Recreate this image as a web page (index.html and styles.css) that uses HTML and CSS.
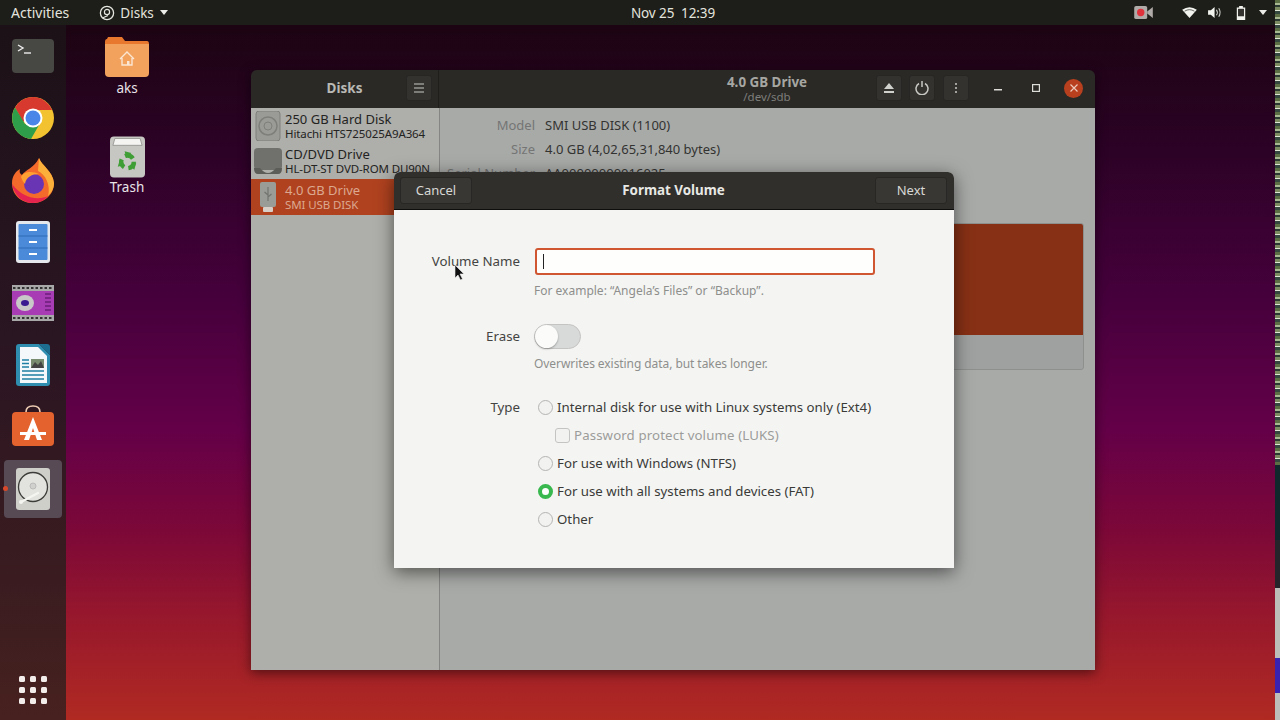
FILE: index.html
```html
<!DOCTYPE html>
<html lang="en">
<head>
    <meta charset="UTF-8">
    <title>Disks - Format Volume</title>
    <link rel="stylesheet" href="styles.css">
</head>
<body>
<div class="screen">

    <header class="topbar">
        <div class="topbar-left">
            <span class="activities">Activities</span>
            <span class="app-menu">
                <svg class="app-menu-icon" viewBox="0 0 16 16"><circle cx="8" cy="8" r="6.6" fill="none" stroke="#e6e6e0" stroke-width="1.3"/><circle cx="8" cy="7" r="2.6" fill="none" stroke="#e6e6e0" stroke-width="1.2"/><path d="M3.5 13 L9 10.5" stroke="#e6e6e0" stroke-width="1.3"/></svg>
                Disks
                <span class="caret"></span>
            </span>
        </div>
        <div class="clock">Nov 25&nbsp; 12:39</div>
        <div class="tray">
            <svg class="tray-rec" viewBox="0 0 20 14"><rect x="0" y="0" width="14" height="14" rx="2" fill="#b0aaa8"/><path d="M14 6 L20 1 V13 L14 8Z" fill="#b0aaa8"/><circle cx="7" cy="7" r="4" fill="#e0323c"/></svg>
            <svg class="tray-wifi" viewBox="0 0 16 12"><path d="M0 3 Q8 -2.5 16 3 L8 12Z" fill="#f2f2ee"/><path d="M2.6 4.6 Q8 1.2 13.4 4.6" fill="none" stroke="#1d1c19" stroke-width=".7"/></svg>
            <svg class="tray-vol" viewBox="0 0 16 14"><path d="M0 4.5 H3 L7 1 V13 L3 9.5 H0Z" fill="#f2f2ee"/><path d="M9 4 Q11 7 9 10 M11.5 2.5 Q14.5 7 11.5 11.5" fill="none" stroke="#d8d8d4" stroke-width="1.1"/></svg>
            <svg class="tray-bat" viewBox="0 0 10 15"><path d="M3 0 H7 V1.5 H9.5 V15 H.5 V1.5 H3Z" fill="#f2f2ee"/><rect x="1.8" y="3" width="6.4" height="8" fill="#33322f"/></svg>
            <span class="caret"></span>
        </div>
    </header>

    <div class="workspace">
        <nav class="dock">
            <div class="dock-item">
                <svg class="dock-icon" viewBox="0 0 42 42"><rect x="0" y="4" width="42" height="34" rx="4" fill="#474744"/><path d="M6 10 L11 13 L6 16" fill="none" stroke="#eee" stroke-width="1.4"/><path d="M12 18 H19" stroke="#eee" stroke-width="1.4"/></svg>
            </div>
            <div class="dock-item">
                <svg class="dock-icon" viewBox="0 0 42 42"><circle cx="21" cy="21" r="21" fill="#f2c230"/><path d="M21 0 A21 21 0 0 0 3 10.500 L11 25 L21 13 H40 A21 21 0 0 0 21 0Z" fill="#d8392f"/><path d="M3 10.500 A21 21 0 0 0 19 42 L27 28 L13 27Z" fill="#2f9e4a"/><circle cx="21" cy="21" r="9.500" fill="#fff"/><circle cx="21" cy="21" r="7.500" fill="#4a86e8"/></svg>
            </div>
            <div class="dock-item">
                <svg class="dock-icon" viewBox="0 0 42 42"><path d="M27 -1 C29 6 41 12 42 24 C42 36 32 44 21 44 C9 44 0 36 0 24 C0 17 4 12 8 10 C7 13 8 15 10 16 C13 11 22 9 27 -1Z" fill="#f36a2a"/><path d="M27 -1 C29 6 41 12 42 24 C42 30 39 34 36 37 C39 26 33 15 26 12Z" fill="#fbb03b"/><path d="M0 25 C2 36 10 44 21 44 C28 44 33 41 36 37 C28 41 12 41 0 25Z" fill="#e5234f"/><circle cx="22" cy="25" r="10" fill="#6a35b5"/><path d="M9 18 C13 11 22 13 27 15 C20 15 14 18 13 25 C11 23 10 21 9 18Z" fill="#ffa032"/></svg>
            </div>
            <div class="dock-item">
                <svg class="dock-icon" viewBox="0 0 42 42"><rect x="4" y="0" width="34" height="42" rx="3" fill="#e4e8ec"/><rect x="6.500" y="3" width="29" height="36" rx="1" fill="#4a8ad8"/><path d="M6.500 15 H35.500 M6.500 27 H35.500" stroke="#2e68b4" stroke-width="1"/><path d="M17 9 H25 M17 21 H25 M17 33 H25" stroke="#fff" stroke-width="1.800"/></svg>
            </div>
            <div class="dock-item">
                <svg class="dock-icon" viewBox="0 0 42 42"><rect x="0" y="3" width="42" height="36" fill="#a83cb4"/><rect x="0" y="3" width="42" height="6" fill="#a8a8a8"/><rect x="0" y="33" width="42" height="6" fill="#a8a8a8"/><path d="M1 6 H41 M1 36 H41" stroke="#333" stroke-width="2" stroke-dasharray="2.500 2"/><path d="M33 12 H39 M33 16 H39 M33 20 H39 M33 24 H39 M33 28 H39" stroke="#7a2688" stroke-width="2"/><ellipse cx="13" cy="21" rx="9" ry="8" fill="#c8c8c8"/><ellipse cx="13" cy="21" rx="4" ry="3" fill="#3a1a90"/></svg>
            </div>
            <div class="dock-item">
                <svg class="dock-icon" viewBox="0 0 42 42"><path d="M7 0 H27 L38 11 V39 Q38 42 35 42 H7 Q4 42 4 39 V3 Q4 0 7 0Z" fill="#2f8eb0"/><path d="M8 3 H26 L35 12 V39 H8Z" fill="#f4f8fa"/><path d="M27 0 H35 Q38 0 38 3 V11Z" fill="#1d6d90"/><rect x="19" y="15" width="13" height="9" fill="#7a8c70"/><path d="M19 24 L23 18 L26 21 L29 17 L32 24Z" fill="#444"/><path d="M10 16 H17 M10 19.500 H17 M10 23 H17 M10 27 H32 M10 31 H32 M10 35 H32" stroke="#1f7fa4" stroke-width="1.500"/></svg>
            </div>
            <div class="dock-item">
                <svg class="dock-icon" viewBox="0 0 42 42"><path d="M14 6 Q14 0 21 0 Q28 0 28 6" fill="none" stroke="#eecdb4" stroke-width="1.600"/><rect x="0" y="6" width="42" height="34" rx="4" fill="#e4622e"/><path d="M21 11 L12 34 H17 L21 22 L25 34 H30Z" fill="#fff"/><path d="M8 26 H34 V29 H8Z" fill="#fff"/></svg>
            </div>
            <div class="dock-item dock-item-active">
                <span class="running-dot"></span>
                <svg class="dock-icon" viewBox="0 0 42 42"><rect x="4" y="0" width="34" height="42" rx="3" fill="#cfcfca"/><circle cx="21" cy="19" r="14.500" fill="#e2e2de" stroke="#3c3c3a" stroke-width="1.300"/><circle cx="21" cy="18" r="3" fill="#d0d0cc" stroke="#bbb"/><path d="M9 34 L26 25" stroke="#f4f4f0" stroke-width="2.500" stroke-linecap="round"/><circle cx="9" cy="34" r="2" fill="#f4f4f0"/></svg>
            </div>
            <div class="apps-grid">
                <span></span><span></span><span></span>
                <span></span><span></span><span></span>
                <span></span><span></span><span></span>
            </div>
        </nav>
    </div>

    <!-- desktop icons -->
    <div class="desk-icon desk-home">
        <svg class="desk-folder" viewBox="0 0 44 40"><path d="M2 2 Q0 2 0 5 V10 H44 V7 Q44 4 42 4 H20 L17 0 H3Z" fill="#e8782e"/><path d="M0 7 H44 V36 Q44 40 40 40 H4 Q0 40 0 36Z" fill="#f2a25c"/><path d="M15 22 L22 15 L29 22 M17 21 V28 H27 V21" fill="none" stroke="#fbe6d4" stroke-width="1.400"/><rect x="22" y="24" width="2.500" height="4" fill="#fbe6d4"/></svg>
        <span>aks</span>
    </div>
    <div class="desk-icon desk-trash">
        <svg class="desk-bin" viewBox="0 0 36 42">
            <rect x="0" y="0" width="36" height="42" rx="4" fill="#c6c6c2"/>
            <path d="M3 9 L5 2 H31 L33 9Z" fill="#f4f4f2" stroke="#8c8c88" stroke-width=".8"/>
            <circle cx="18" cy="26" r="6.500" fill="none" stroke="#3f9e35" stroke-width="4.500" stroke-dasharray="9 4.600"/>
            <path d="M15 15 L22 17 L17 22Z M27 27 L25 34 L20 30Z M8 31 L10 24 L15 29Z" fill="#3f9e35"/>
        </svg>
        <span>Trash</span>
    </div>

    <!-- disks window -->
    <section class="window">
        <div class="window-head">
            <div class="head-side">
                <span></span>
                <span class="head-title">Disks</span>
                <div class="head-actions">
                    <button class="icon-btn hamburger">
                        <svg viewBox="0 0 10 9"><path d="M0 .5 H10 M0 4.500 H10 M0 8.500 H10" stroke="#c8c8c4" stroke-width="1"/></svg>
                    </button>
                </div>
            </div>
            <div class="head-main">
                <span></span>
                <div class="head-titles">
                    <div class="drive-title">4.0 GB Drive</div>
                    <div class="drive-path">/dev/sdb</div>
                </div>
                <div class="head-actions">
                    <button class="icon-btn"><svg viewBox="0 0 10 10"><path d="M5 0 L10 6 H0Z M0 8 H10 V10 H0Z" fill="#d0d0cc"/></svg></button>
                    <button class="icon-btn"><svg class="power" viewBox="0 0 14 14"><path d="M4 2.500 A6 6 0 1 0 10 2.500 M7 0 V6" fill="none" stroke="#c8c8c4" stroke-width="1.500"/></svg></button>
                    <button class="icon-btn"><svg viewBox="0 0 10 10"><circle cx="5" cy="1" r="1" fill="#c8c8c4"/><circle cx="5" cy="5" r="1" fill="#c8c8c4"/><circle cx="5" cy="9" r="1" fill="#c8c8c4"/></svg></button>
                    <div class="win-controls">
                        <svg class="win-min" viewBox="0 0 8 2"><rect width="8" height="1.500" fill="#dcdcd8"/></svg>
                        <svg class="win-max" viewBox="0 0 8 8"><rect x=".6" y=".6" width="6.800" height="6.800" fill="none" stroke="#dcdcd8" stroke-width="1.200"/></svg>
                        <span class="win-close"><svg viewBox="0 0 8 8"><path d="M.5 .5 L7.500 7.500 M7.500 .5 L.5 7.500" stroke="#eccabc" stroke-width="1.200"/></svg></span>
                    </div>
                </div>
            </div>
        </div>
        <div class="window-body">
            <aside class="sidebar">
                <div class="disk-row">
                    <svg class="disk-icon" viewBox="0 0 28 30"><rect x="2" y="0" width="24" height="30" rx="3" fill="#9a9a96" stroke="#7e7e7a"/><circle cx="14" cy="15" r="9" fill="none" stroke="#7e7e7a" stroke-width="1.500"/><circle cx="14" cy="15" r="4" fill="none" stroke="#7e7e7a"/></svg>
                    <div>
                        <div class="disk-name">250 GB Hard Disk</div>
                        <div class="disk-sub">Hitachi HTS725025A9A364</div>
                    </div>
                </div>
                <div class="disk-row">
                    <svg class="disk-icon" viewBox="0 0 28 30"><rect x="0" y="2" width="28" height="22" rx="4" fill="#70706c"/><path d="M0 22 Q0 28 4 28 H24 Q28 28 28 22 H22 Q18 27 14 27 Q10 27 6 22Z" fill="#5c5c58"/></svg>
                    <div>
                        <div class="disk-name">CD/DVD Drive</div>
                        <div class="disk-sub">HL-DT-ST DVD-ROM DU90N</div>
                    </div>
                </div>
                <div class="disk-row disk-row-selected">
                    <svg class="disk-icon" viewBox="0 0 28 30"><rect x="6" y="0" width="16" height="25" rx="2" fill="#9a9c98"/><rect x="9" y="25" width="10" height="5" rx="1" fill="#d8cfc8"/><path d="M14 5 V19 M14 13 L10.500 10 M14 15 L17.500 12" stroke="#72746f" stroke-width="1.200" fill="none"/></svg>
                    <div>
                        <div class="disk-name">4.0 GB Drive</div>
                        <div class="disk-sub">SMI USB DISK</div>
                    </div>
                </div>
            </aside>
            <main class="details">
                <dl class="info">
                    <dt>Model</dt><dd>SMI USB DISK (1100)</dd>
                    <dt>Size</dt><dd>4.0 GB (4,02,65,31,840 bytes)</dd>
                    <dt>Serial Number</dt><dd>AA00000000016025</dd>
                </dl>
                <div class="volume-map">
                    <div class="volume-part"></div>
                </div>
            </main>
        </div>
    </section>

    <!-- format dialog -->
    <section class="dialog">
        <div class="dialog-head">
            <div><button class="head-btn">Cancel</button></div>
            <span class="dialog-title">Format Volume</span>
            <div class="dialog-next"><button class="head-btn">Next</button></div>
        </div>
        <form class="dialog-form">
            <div class="field field-name">
                <label class="field-label">Volume Name</label>
                <div class="name-input"><span class="text-cursor"></span></div>
            </div>
            <p class="hint">For example: “Angela’s Files” or “Backup”.</p>

            <div class="field field-erase">
                <label class="field-label">Erase</label>
                <span class="switch"><span class="switch-knob"></span></span>
            </div>
            <p class="hint">Overwrites existing data, but takes longer.</p>

            <div class="field field-type">
                <label class="field-label">Type</label>
                <div class="options">
                    <div class="option"><span class="radio"></span>Internal disk for use with Linux systems only (Ext4)</div>
                    <div class="option option-sub"><span class="checkbox"></span>Password protect volume (LUKS)</div>
                    <div class="option"><span class="radio"></span>For use with Windows (NTFS)</div>
                    <div class="option"><span class="radio radio-on"></span>For use with all systems and devices (FAT)</div>
                    <div class="option"><span class="radio"></span>Other</div>
                </div>
            </div>
        </form>
    </section>

    <svg class="mouse" viewBox="0 0 11 17"><path d="M1 1 V14 L4 11 L6.500 16 L8.500 15 L6 10 H10Z" fill="#111" stroke="#eee" stroke-width=".6"/></svg>

    <!-- video glitch on the right edge -->
    <div class="edge-strip">
        <div class="edge-stripes"></div>
        <div class="edge-teal"></div>
        <div class="edge-dark"></div>
        <div class="edge-grey"><div class="edge-blue"></div></div>
    </div>
</div>
</body>
</html>
```

FILE: styles.css
```css
* {
    box-sizing: border-box;
}

body {
    margin: 0;
    font-family: "Noto Sans", sans-serif;
    font-size: 13px;
    overflow: hidden;
}

.screen {
    position: relative;
    width: 1280px;
    height: 720px;
    overflow: hidden;
    display: flex;
    flex-direction: column;
    background: linear-gradient(180deg, #1c0412 25px, #2c0226 150px, #46003c 300px, #640048 430px, #7c0838 530px, #98182c 620px, #b02a22 720px);
}

/* top bar */
.topbar {
    height: 25px;
    flex-shrink: 0;
    display: grid;
    grid-template-columns: 1fr auto 1fr;
    align-items: center;
    background: #1d1d19;
    color: #e4e4de;
    font-size: 13.5px;
    padding: 0 11px;
}

.topbar-left {
    display: flex;
    align-items: center;
    gap: 30px;
}

.activities {
    font-size: 14px;
}

.app-menu {
    display: flex;
    align-items: center;
    gap: 5px;
}

.app-menu-icon {
    width: 16px;
    height: 16px;
}

.caret {
    display: inline-block;
    width: 0;
    height: 0;
    margin-left: 1px;
    border-left: 4.5px solid transparent;
    border-right: 4.5px solid transparent;
    border-top: 5px solid #ecece8;
}

.clock {
    margin-left: 66px;
    letter-spacing: -0.1px;
}

.tray {
    display: flex;
    align-items: center;
    justify-content: flex-end;
    padding-right: 2px;
}

.tray-rec {
    width: 19px;
    height: 13px;
    margin-right: 29px;
}

.tray-wifi {
    width: 15px;
    height: 11px;
    margin-right: 11px;
}

.tray-vol {
    width: 15px;
    height: 13px;
    margin-right: 13px;
}

.tray-bat {
    width: 10px;
    height: 14px;
    margin-right: 12px;
}

/* dock */
.workspace {
    flex: 1;
    display: flex;
    min-height: 0;
}

.dock {
    width: 66px;
    display: flex;
    flex-direction: column;
    align-items: center;
    background: linear-gradient(180deg, #1c1117 0%, #2a1522 45%, #3a1c20 80%, #47211f 100%);
}

.dock-item {
    position: relative;
    width: 58px;
    height: 58px;
    margin: 2px 0 1.85px;
    border-radius: 4px;
    display: flex;
    align-items: center;
    justify-content: center;
}

.dock-item-active {
    background: #574a55;
}

.dock-icon {
    width: 42px;
    height: 42px;
    overflow: visible;
}

.running-dot {
    position: absolute;
    left: -1px;
    top: 26px;
    width: 5px;
    height: 5px;
    border-radius: 50%;
    background: #d8482a;
}

.apps-grid {
    margin-top: auto;
    margin-bottom: 16px;
    display: grid;
    grid-template-columns: repeat(3, 6px);
    grid-auto-rows: 6px;
    gap: 5px;
}

.apps-grid span {
    background: #f2ecea;
    border-radius: 1.5px;
}

/* desktop icons */
.desk-icon {
    position: absolute;
    width: 80px;
    display: flex;
    flex-direction: column;
    align-items: center;
    color: #e8e4e8;
    font-size: 13.5px;
}

.desk-home {
    left: 87px;
    top: 37px;
}

.desk-trash {
    left: 87px;
    top: 136px;
}

.desk-folder {
    width: 44px;
    height: 40px;
    margin-bottom: 2px;
}

.desk-bin {
    width: 35px;
    height: 42px;
}

/* window */
.window {
    position: absolute;
    left: 251px;
    top: 70px;
    width: 844px;
    height: 600px;
    border-radius: 6px 6px 0 0;
    overflow: hidden;
    display: flex;
    flex-direction: column;
    box-shadow: 0 3px 12px rgba(0, 0, 0, 0.5);
}

.window-head {
    height: 38px;
    flex-shrink: 0;
    display: flex;
    background: #2a2926;
}

.head-side {
    width: 188px;
    padding-bottom: 2px;
    display: grid;
    grid-template-columns: 1fr auto 1fr;
    align-items: center;
    border-right: 1px solid #1f1e1c;
}

.head-main {
    flex: 1;
    display: grid;
    grid-template-columns: 1fr auto 1fr;
    align-items: center;
}

.head-main .head-actions {
    margin-bottom: 2px;
}

.head-title {
    color: #b8b8b4;
    font-weight: 700;
    font-size: 13.5px;
}

.head-actions {
    display: flex;
    justify-content: flex-end;
    align-items: center;
    gap: 7.5px;
}

.icon-btn {
    width: 26px;
    height: 26px;
    padding: 0;
    background: #33322f;
    border: 1px solid #272624;
    border-radius: 3px;
    display: flex;
    align-items: center;
    justify-content: center;
}

.icon-btn svg {
    width: 10px;
    height: 10px;
}

.icon-btn .power {
    width: 14px;
    height: 14px;
}

.hamburger {
    margin-right: 6px;
}

.head-titles {
    text-align: center;
}

.drive-title {
    color: #a6a6a2;
    font-weight: 700;
    font-size: 13.4px;
    line-height: 16px;
}

.drive-path {
    color: #7e7e7a;
    font-size: 11.5px;
    line-height: 14px;
}

.win-controls {
    display: flex;
    align-items: center;
    margin-left: 18px;
    margin-right: 12px;
}

.win-min {
    width: 8px;
    height: 2px;
    margin-top: 4px;
}

.win-max {
    width: 8px;
    height: 8px;
    margin-left: 30px;
}

.win-close {
    width: 19px;
    height: 19px;
    margin-left: 24px;
    border-radius: 50%;
    background: #b8401e;
    display: flex;
    align-items: center;
    justify-content: center;
}

.win-close svg {
    width: 8px;
    height: 8px;
}

.window-body {
    flex: 1;
    display: flex;
    min-height: 0;
}

.sidebar {
    width: 189px;
    background: #aeaeaa;
    border-right: 1px solid #858684;
}

.disk-row {
    height: 36px;
    padding-left: 3px;
    display: flex;
    align-items: center;
    gap: 3px;
    overflow: hidden;
    color: #232322;
}

.disk-row:first-child {
    height: 35px;
}

.disk-row-selected {
    background: #b0421f;
    color: #dca890;
}

.disk-icon {
    width: 28px;
    height: 30px;
    flex-shrink: 0;
}

.disk-name {
    font-size: 13px;
    line-height: 16px;
    white-space: nowrap;
}

.disk-sub {
    font-size: 11.5px;
    line-height: 14px;
    letter-spacing: -0.1px;
    white-space: nowrap;
}

.details {
    flex: 1;
    padding: 6px 11px 0 0;
    background: #a8aaa8;
    display: flex;
    flex-direction: column;
}

.info {
    margin: 0;
    display: grid;
    grid-template-columns: 95px 1fr;
    column-gap: 10px;
    row-gap: 1px;
    font-size: 13px;
    line-height: 23px;
}

.info dt {
    text-align: right;
    color: #747574;
}

.info dd {
    margin: 0;
    color: #333331;
}

.volume-map {
    height: 147px;
    margin-top: 38px;
    margin-left: 12px;
    border: 1px solid #8e908e;
    border-radius: 3px;
    overflow: hidden;
    background: #9fa1a0;
}

.volume-part {
    height: 111px;
    background: #873015;
}

/* dialog */
.dialog {
    position: absolute;
    left: 394px;
    top: 172px;
    width: 560px;
    height: 396px;
    border-radius: 6px 6px 0 0;
    overflow: hidden;
    display: flex;
    flex-direction: column;
    background: #f4f5f3;
    color: #3a3a38;
    box-shadow: 0 4px 18px rgba(0, 0, 0, 0.55);
}

.dialog-head {
    height: 38px;
    flex-shrink: 0;
    padding: 5px 7px 6px 6px;
    display: grid;
    grid-template-columns: 1fr auto 1fr;
    align-items: start;
    background: #302f2c;
    border-bottom: 1px solid #0e0e0c;
}

.dialog-title {
    color: #e8e8e4;
    font-weight: 700;
    font-size: 13.4px;
    line-height: 27px;
}

.dialog-next {
    display: flex;
    justify-content: flex-end;
}

.head-btn {
    width: 72px;
    height: 27px;
    padding: 0 0 2px;
    background: #383734;
    border: 1px solid #282725;
    border-radius: 3px;
    color: #d8d8d4;
    font-family: inherit;
    font-size: 13px;
}

.dialog-form {
    padding-top: 38px;
}

.field {
    display: flex;
    align-items: center;
}

.field-label {
    width: 126px;
    margin-right: 14px;
    padding-bottom: 1px;
    text-align: right;
    font-size: 13.3px;
    flex-shrink: 0;
    color: #444442;
}

.name-input {
    width: 340px;
    height: 27px;
    margin-left: 1px;
    padding-left: 6px;
    display: flex;
    align-items: center;
    background: #fefefc;
    border: 2px solid #cf5630;
    border-radius: 3px;
}

.text-cursor {
    width: 1px;
    height: 15px;
    background: #222;
}

.hint {
    margin: 7px 0 0 140px;
    font-size: 12px;
    line-height: 18px;
    color: #8e8e8c;
}

.field-erase {
    margin-top: 24px;
}

.field-erase + .hint {
    margin-top: 6px;
    letter-spacing: -0.07px;
}

.switch {
    width: 47px;
    height: 25px;
    border: 1px solid #c4c4c2;
    border-radius: 13px;
    background: #d8d9d9;
    display: block;
}

.switch-knob {
    display: block;
    width: 23px;
    height: 23px;
    border-radius: 50%;
    background: #fbfbfa;
    box-shadow: 0 1px 2px rgba(0, 0, 0, 0.3);
}

.field-type {
    margin-top: 20px;
    align-items: flex-start;
}

.field-type .field-label {
    line-height: 28px;
}

.options {
    margin-left: 4px;
}

.option {
    height: 28px;
    display: flex;
    align-items: center;
    gap: 4px;
    font-size: 13.25px;
    white-space: nowrap;
}

.option-sub {
    margin-left: 17px;
    letter-spacing: 0.12px;
    color: #9c9c9a;
}

.radio {
    width: 15px;
    height: 15px;
    border: 1px solid #b4b4b2;
    border-radius: 50%;
    background: #f2f2f0;
    flex-shrink: 0;
}

.radio-on {
    border: 4.5px solid #38b84e;
    background: #fff;
}

.checkbox {
    width: 15px;
    height: 15px;
    border: 1px solid #c4c4c2;
    border-radius: 3px;
    background: #f2f2f0;
    flex-shrink: 0;
}

.mouse {
    position: absolute;
    left: 454px;
    top: 264px;
    width: 11px;
    height: 17px;
}

/* right edge */
.edge-strip {
    position: absolute;
    right: 0;
    top: 0;
    width: 5px;
    height: 720px;
    display: flex;
    flex-direction: column;
}

.edge-stripes {
    height: 465px;
    background: repeating-linear-gradient(180deg, #5c6e44 0, #5c6e44 3px, #a8b890 3px, #a8b890 5px, #2c3a34 5px, #2c3a34 7px, #7c8c60 7px, #7c8c60 10px, #dfe6d4 10px, #dfe6d4 11px, #34483f 11px, #34483f 14px);
}

.edge-teal {
    height: 75px;
    background: #10282c;
}

.edge-dark {
    height: 48px;
    background: #24242a;
}

.edge-grey {
    flex: 1;
    padding-top: 70px;
    background: #bcbcb8;
}

.edge-blue {
    height: 35px;
    background: #3a22b0;
}
```
